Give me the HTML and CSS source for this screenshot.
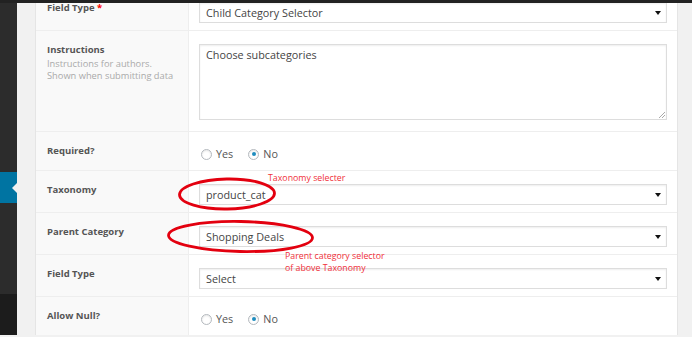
FILE: index.html
```html
<!DOCTYPE html>
<html lang="en">
<head>
    <meta charset="UTF-8">
    <title>Field settings</title>
    <link rel="stylesheet" href="styles.css">
</head>
<body>
    <div class="topbar"></div>
    <div class="main">
        <div class="sidebar">
            <div class="menu-top"></div>
            <div class="menu-current"></div>
            <div class="menu-rest"></div>
            <div class="menu-bottom"></div>
        </div>
        <div class="content">
            <div class="panel">
                <div class="row">
                    <div class="label"><b>Field Type <span class="req">*</span></b></div>
                    <div class="field"><div class="select">Child Category Selector<span class="arrow"></span></div></div>
                </div>
                <div class="row">
                    <div class="label">
                        <b>Instructions</b>
                        <p class="desc">Instructions for authors.<br>Shown when submitting data</p>
                    </div>
                    <div class="field field-area"><div class="textarea">Choose subcategories<span class="grip"></span></div></div>
                </div>
                <div class="row">
                    <div class="label"><b>Required?</b></div>
                    <div class="field radios">
                        <label class="opt"><span class="radio"></span>Yes</label>
                        <label class="opt"><span class="radio checked"></span>No</label>
                    </div>
                </div>
                <div class="row">
                    <div class="label"><b>Taxonomy</b></div>
                    <div class="field"><div class="select">product_cat<span class="arrow"></span></div></div>
                </div>
                <div class="row">
                    <div class="label"><b>Parent Category</b></div>
                    <div class="field"><div class="select">Shopping Deals<span class="arrow"></span></div></div>
                </div>
                <div class="row">
                    <div class="label"><b>Field Type</b></div>
                    <div class="field"><div class="select">Select<span class="arrow"></span></div></div>
                </div>
                <div class="row">
                    <div class="label"><b>Allow Null?</b></div>
                    <div class="field radios">
                        <label class="opt"><span class="radio"></span>Yes</label>
                        <label class="opt"><span class="radio checked"></span>No</label>
                    </div>
                </div>
            </div>
        </div>
    </div>

    <!-- red annotations drawn over the screenshot -->
    <svg class="marks" width="692" height="337" viewBox="0 0 692 337">
        <ellipse cx="227" cy="194" rx="47.5" ry="15" transform="rotate(-1 227 194)"/>
        <ellipse cx="240.5" cy="236.5" rx="72" ry="15" transform="rotate(1 240 236)"/>
    </svg>
    <span class="note note-tax">Taxonomy selecter</span>
    <span class="note note-parent">Parent category selector<br>of above Taxonomy</span>
</body>
</html>
```

FILE: styles.css
```css
body {
    margin: 0;
    position: relative;
    height: 337px;
    overflow: hidden;
    background: #f1f1f1;
    font-family: "Open Sans", "Noto Sans", sans-serif;
    color: #444;
}
.topbar {
    position: relative;
    z-index: 2;
    height: 3px;
    background: #222;
}
.main {
    display: flex;
    margin-top: -14px;
}
.sidebar {
    width: 17px;
    display: flex;
    flex-direction: column;
    background: #1c1c1c;
}
.menu-top {
    height: 183px;
    background: #2c2c2c;
}
.menu-current {
    position: relative;
    height: 31px;
    background: #0074a2;
}
.menu-current::after {
    content: "";
    position: absolute;
    right: 0;
    top: 11px;
    border: 5px solid transparent;
    border-right-color: #f1f1f1;
}
.menu-rest {
    height: 91px;
    background: #2c2c2c;
}
.menu-bottom {
    flex: 1;
    height: 60px;
}
.content {
    flex: 1;
    padding: 0 14px 0 18px;
}
.panel {
    background: #fff;
    border-left: 1px solid #e5e5e5;
    border-right: 1px solid #e5e5e5;
}
.row {
    display: grid;
    grid-template-columns: 153px 1fr;
    border-top: 1px solid #eeeeee;
}
.row:first-child {
    border-top: 0;
}
.label {
    background: #f9f9f9;
    border-right: 1px solid #eeeeee;
    padding: 12px 11px;
    font-size: 9.5px;
    line-height: 13px;
    color: #555;
}
.label b {
    font-weight: 700;
}
.req {
    color: #f00;
}
.desc {
    margin: 2px 0 0;
    font-size: 9.3px;
    line-height: 12px;
    color: #aaa;
}
.field {
    padding: 13px 10px 7px 10px;
}
.field-area {
    padding-bottom: 11px;
}
.select {
    position: relative;
    height: 19px;
    line-height: 19px;
    border: 1px solid #ddd;
    box-shadow: inset 0 1px 2px rgba(0, 0, 0, 0.07);
    padding-left: 6px;
    font-size: 10.8px;
    color: #444;
}
.arrow {
    position: absolute;
    right: 5px;
    top: 8px;
    border: 3px solid transparent;
    border-top: 4px solid #111;
    border-bottom: 0;
}
.textarea {
    position: relative;
    height: 72px;
    border: 1px solid #ddd;
    box-shadow: inset 0 1px 2px rgba(0, 0, 0, 0.07);
    padding: 2px 6px 0;
    font-size: 10.8px;
    line-height: 15px;
    color: #444;
}
.grip {
    position: absolute;
    right: 1px;
    bottom: 1px;
    width: 6px;
    height: 6px;
    background: linear-gradient(135deg, transparent 45%, #aaa 46%, #aaa 55%, transparent 56%, transparent 72%, #aaa 73%, #aaa 82%, transparent 83%);
}
.radios {
    display: flex;
    gap: 15px;
    padding: 16px 10px 10px 12px;
    font-size: 10.8px;
    line-height: 12px;
    color: #555;
}
.opt {
    display: flex;
    align-items: center;
    gap: 4px;
}
.radio {
    width: 11px;
    height: 11px;
    box-sizing: border-box;
    border: 1px solid #b4b9be;
    border-radius: 50%;
    box-shadow: inset 0 1px 2px rgba(0, 0, 0, 0.1);
    display: flex;
    align-items: center;
    justify-content: center;
}
.radio.checked::before {
    content: "";
    width: 4px;
    height: 4px;
    border-radius: 50%;
    background: #1e8cbe;
}
.marks {
    position: absolute;
    left: 0;
    top: 0;
    fill: none;
    stroke: #e3000f;
    stroke-width: 2.8;
}
.note {
    position: absolute;
    font-size: 8.8px;
    line-height: 12px;
    color: #f0303a;
}
.note-tax {
    left: 268px;
    top: 172px;
}
.note-parent {
    left: 285px;
    top: 250px;
}
```
